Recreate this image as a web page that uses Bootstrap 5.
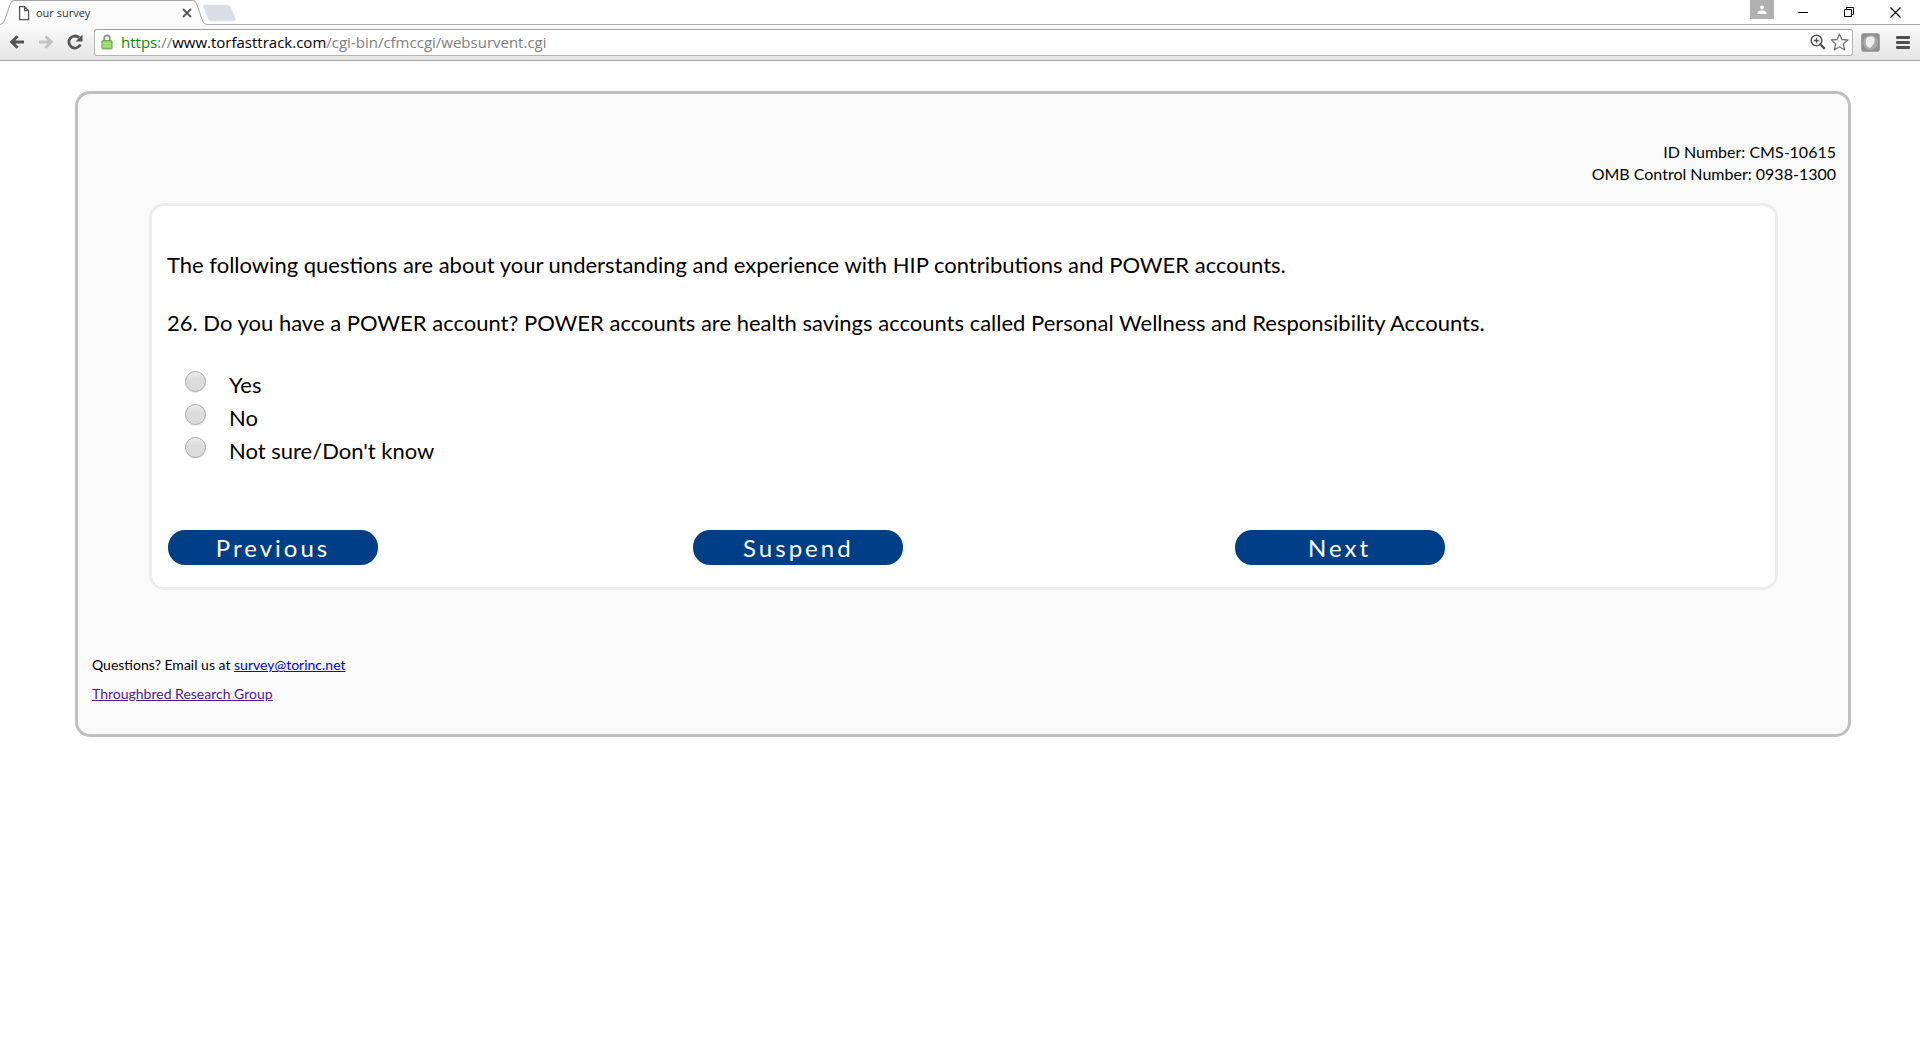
<!DOCTYPE html>
<html lang="en">
<head>
<meta charset="utf-8">
<meta name="viewport" content="width=device-width, initial-scale=1">
<title>our survey</title>
<link href="https://cdn.jsdelivr.net/npm/bootstrap@5.3.0/dist/css/bootstrap.min.css" rel="stylesheet">
<style>
  body { font-family: Lato, "Liberation Sans", sans-serif; color: #000; background: #fff; }
  .browser { font-family: "Open Sans", "Noto Sans", sans-serif; }
  .tabstrip { height: 25px; padding-right: 2px; border-bottom: 1px solid #a9a9a9; }
  .tab-shape { left: 0; top: 0; }
  .page-tab { width: 208px; height: 26px; padding: 0 16px 0 17px; font-size: 11px; color: #333; }
  .plain-btn { border: 0; padding: 0; background: none; display: flex; align-items: center; justify-content: center; }
  .win-btn { width: 46px; height: 24px; }
  .user-btn { width: 24px; height: 19px; margin-right: 6px; background: #b0b0b0; }
  .toolbar { height: 36px; padding: 4px 10px 5px 7px; background: linear-gradient(#fbfbfb, #e4e4e4); border-bottom: 1px solid #a5a5a5; }
  .nav-set { gap: 9px; margin-right: 9px; }
  .nav-btn { width: 20px; height: 20px; }
  .address { height: 27px; border: 1px solid #b5b5b5; border-top-color: #a0a0a0; border-radius: 3px; padding: 0 3px 0 6px; background: #fff; font-size: 15px; line-height: 25px; color: #808080; }
  .secure { color: #0b8a0b; }
  .host { color: #000; }

  .survey { margin: 30px 69px 0 75px; padding: 47px 12px 26px; border: 3px solid #c0c0c0; border-radius: 15px; background: #fafafa; }
  .form-ids { font-size: 16px; line-height: 22px; }
  .question-box { margin: 18px 58px 0 59px; padding: 44px 15px 22px; border: 3px solid #ededed; border-radius: 15px; background: #fff; }
  .question-text { font-size: 22px; line-height: 29px; margin-bottom: 29px; }
  .answers { padding-top: 2px; }
  .answer { height: 33px; font-size: 22px; line-height: 33px; padding-left: 18px; }
  .answer input { appearance: none; width: 21px; height: 21px; margin: 0 23px 7px 0; border: 1px solid #a8a8a8; border-radius: 50%; background: linear-gradient(#ededed, #dcdcdc 40%); box-shadow: 0 1px 1px #e8e8e8; }
  .answer input:checked { background: radial-gradient(#444 30%, #dedede 35%); }
  .actions { display: grid; grid-template-columns: 33% 34% 33%; margin-top: 63px; padding-left: 1px; }
  .action-btn { width: 210px; height: 35px; padding: 1px 0 0; border: 0; border-radius: 17px; background: #003f87; color: #fff; font-size: 24px; line-height: 34px; letter-spacing: 3px; }
  .contact { margin-top: 60px; padding-left: 2px; font-size: 14px; line-height: 29px; }
  .mail { color: #00e; }
  .group-link { color: #551a8b; }
</style>
<script src="https://cdn.jsdelivr.net/npm/bootstrap@5.3.0/dist/js/bootstrap.bundle.min.js"></script>
</head>
<body>
<header class="browser">
  <div class="tabstrip d-flex position-relative">
    <svg class="tab-shape position-absolute" width="240" height="25" viewBox="0 0 240 25" aria-hidden="true">
      <path d="M0 24.5C3 24 4 22 5 19L10 5C11 2 12 .5 15 .5H192C195 .5 196 2 197 5L202 19C203 22 204 24.500 208 24.500V26H0Z" fill="#fbfbfb" stroke="#a5a5a5"/>
      <path d="M205 5h22c2 0 3 1 4 3l4 10c1 2 0 3-2 3h-21c-2 0-3-1-4-3l-4-10c-1-2-1-3 1-3z" fill="#d8dee6" stroke="#e3e7ec" stroke-width=".8"/>
    </svg>
    <div class="page-tab position-relative d-flex align-items-center">
      <svg width="15" height="15" viewBox="0 0 15 15" fill="#fff" stroke="#555" stroke-width="1.300" aria-hidden="true"><path d="M2.600.700h5l4 4v9h-9zM7.600.700v4h4"/></svg>
      <span class="ms-1">our survey</span>
      <button class="plain-btn ms-auto" aria-label="Close tab"><svg width="10" height="10" viewBox="0 0 10 10" stroke="#555" stroke-width="1.800"><path d="M1 1l8 8M9 1L1 9"/></svg></button>
    </div>
    <div class="ms-auto d-flex">
      <button class="plain-btn user-btn" aria-label="Profile"><svg width="10" height="10" viewBox="0 0 10 10" fill="#fff"><circle cx="5" cy="2.500" r="2"/><path d="M.500 9V8C.500 6 3 5.400 5 5.400S9.500 6 9.500 8v1z"/></svg></button>
      <button class="plain-btn win-btn" aria-label="Minimize"><svg width="12" height="12" viewBox="0 0 12 12" stroke="#000"><path d="M1 6.500h10"/></svg></button>
      <button class="plain-btn win-btn" aria-label="Restore"><svg width="11" height="11" viewBox="0 0 11 11" fill="none" stroke="#000"><path d="M.500 2.500h7v7h-7zM2.500 2.500v-2h7v7h-2"/></svg></button>
      <button class="plain-btn win-btn" aria-label="Close"><svg width="11" height="11" viewBox="0 0 11 11" stroke="#000" stroke-width="1.200"><path d="M.500.500l10 10M10.500.500l-10 10"/></svg></button>
    </div>
  </div>
  <div class="toolbar d-flex align-items-center">
    <div class="nav-set d-flex">
      <button class="plain-btn nav-btn" aria-label="Back"><svg width="16" height="14" viewBox="0 0 16 14" fill="none" stroke="#555" stroke-width="3"><path d="M15 7H3M8.500 1.200L2.700 7l5.800 5.800"/></svg></button>
      <button class="plain-btn nav-btn" aria-label="Forward"><svg width="16" height="14" viewBox="0 0 16 14" fill="none" stroke="#c4c4c4" stroke-width="3"><path d="M1 7h12M7.500 1.200L13.300 7l-5.800 5.800"/></svg></button>
      <button class="plain-btn nav-btn" aria-label="Reload"><svg width="16" height="16" viewBox="0 0 16 16"><path d="M13.400 10.500A6 6 0 1 1 12 3.600" fill="none" stroke="#555" stroke-width="2.800"/><path d="M15.500.500v7h-7z" fill="#555"/></svg></button>
    </div>
    <div class="address flex-grow-1 d-flex align-items-center">
      <svg width="12" height="16" viewBox="0 0 13 16" aria-hidden="true"><path d="M3.500 8V4a3 3 0 0 1 6 0v4" fill="none" stroke="#8f9790" stroke-width="2"/><rect x="1" y="6.500" width="11" height="9" rx="1" fill="#8fd568" stroke="#5ba33c"/><path d="M2 9.500h9M2 12.500h9" stroke="#b7e99a"/></svg>
      <span class="ms-2 text-nowrap"><span class="secure">https</span>://<span class="host">www.torfasttrack.com</span>/cgi-bin/cfmccgi/websurvent.cgi</span>
      <button class="plain-btn ms-auto" aria-label="Zoom"><svg width="16" height="16" viewBox="0 0 16 16" fill="none" stroke="#555"><circle cx="6.500" cy="6.500" r="5.300" stroke-width="1.600"/><path d="M6.500 3.800v5.400M3.800 6.500h5.400" stroke-width="1.300"/><path d="M10.500 10.500l4.300 4.300" stroke-width="2.400"/></svg></button>
      <button class="plain-btn ms-1" aria-label="Bookmark"><svg width="19" height="18" viewBox="0 0 19 18" fill="#fff" stroke="#777" stroke-width="1.300" stroke-linejoin="round"><path d="M9.500 1l2.300 5.500 6 .5-4.600 4 1.500 6-5.200-3.200L4.300 17l1.500-6L1.200 7l6-.5z"/></svg></button>
    </div>
    <button class="plain-btn ms-2" aria-label="Extension"><svg width="19" height="19" viewBox="0 0 19 19"><rect x=".500" y=".500" width="18" height="18" rx="2" fill="#8e8e8e" stroke="#a5a5a5"/><circle cx="9.500" cy="9.500" r="7.500" fill="#aaa"/><path d="M6 4.500q4-2 7 0c2 4-1 8-4 10.500C4.500 14 3.500 8 6 4.500z" fill="#eee"/></svg></button>
    <button class="plain-btn ms-3" aria-label="Menu"><svg width="14" height="13" viewBox="0 0 14 13" fill="#505050"><rect width="14" height="3" rx="1"/><rect y="5" width="14" height="3" rx="1"/><rect y="10" width="14" height="3" rx="1"/></svg></button>
  </div>
</header>
<main class="survey">
  <div class="form-ids text-end">
    <div>ID Number: CMS-10615</div>
    <div>OMB Control Number: 0938-1300</div>
  </div>
  <form class="question-box">
    <p class="question-text">The following questions are about your understanding and experience with HIP contributions and POWER accounts.</p>
    <p class="question-text" id="q26">26. Do you have a POWER account? POWER accounts are health savings accounts called Personal Wellness and Responsibility Accounts.</p>
    <div class="answers" role="radiogroup" aria-labelledby="q26">
      <div class="answer d-flex align-items-center"><input type="radio" name="q26" id="yes"><label for="yes">Yes</label></div>
      <div class="answer d-flex align-items-center"><input type="radio" name="q26" id="no"><label for="no">No</label></div>
      <div class="answer d-flex align-items-center"><input type="radio" name="q26" id="unsure"><label for="unsure">Not sure/Don't know</label></div>
    </div>
    <div class="actions">
      <button type="button" class="action-btn">Previous</button>
      <button type="button" class="action-btn">Suspend</button>
      <button type="button" class="action-btn">Next</button>
    </div>
  </form>
  <footer class="contact">
    <div>Questions? Email us at <a class="mail" href="mailto:survey@torinc.net">survey@torinc.net</a></div>
    <div><a class="group-link" href="#">Throughbred Research Group</a></div>
  </footer>
</main>
</body>
</html>
